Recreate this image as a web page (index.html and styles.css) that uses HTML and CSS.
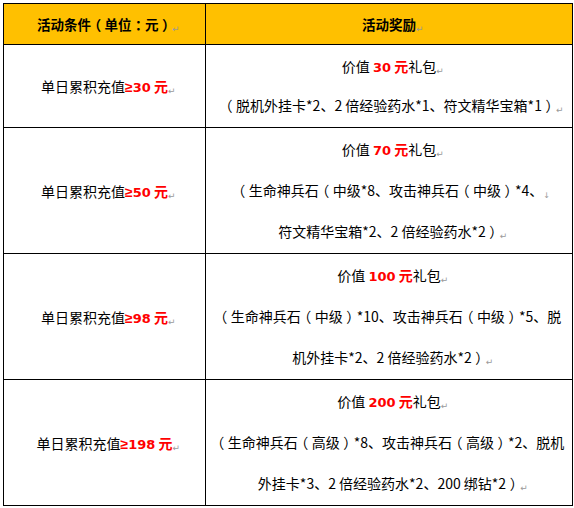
FILE: index.html
```html
<!DOCTYPE html>
<html lang="zh-CN">
<head>
<meta charset="utf-8">
<title>活动奖励</title>
<link rel="stylesheet" href="styles.css">
</head>
<body>
<table class="tbl">
  <colgroup><col class="c1"><col class="c2"></colgroup>
  <tr class="head">
    <th class="cond">活动条件<span class="pa">（</span>单位<span class="pa">：</span>元<span class="pa">）</span><span class="pm">↵</span></th>
    <th class="reward">活动奖励<span class="pm">↵</span></th>
  </tr>
  <tr class="r1">
    <td class="cond">单日累积充值<span class="ge">≥</span><span class="num">30</span> <span class="yuan">元</span><span class="pm">↵</span></td>
    <td class="reward">
      <div class="line">价值 <span class="num">30</span> <span class="yuan">元</span>礼包<span class="pm">↵</span></div>
      <div class="line"><span class="pa">（</span>脱机外挂卡*2、2 倍经验药水*1、符文精华宝箱*1<span class="pa">）</span><span class="pm">↵</span></div>
    </td>
  </tr>
  <tr class="r2">
    <td class="cond">单日累积充值<span class="ge">≥</span><span class="num">50</span> <span class="yuan">元</span><span class="pm">↵</span></td>
    <td class="reward">
      <div class="line">价值 <span class="num">70</span> <span class="yuan">元</span>礼包<span class="pm">↵</span></div>
      <div class="line"><span class="pa">（</span>生命神兵石<span class="pa">（</span>中级*8、攻击神兵石<span class="pa">（</span>中级<span class="pa">）</span>*4、<span class="pm br">↓</span></div>
      <div class="line">符文精华宝箱*2、2 倍经验药水*2<span class="pa">）</span><span class="pm">↵</span></div>
    </td>
  </tr>
  <tr class="r3">
    <td class="cond">单日累积充值<span class="ge">≥</span><span class="num">98</span> <span class="yuan">元</span><span class="pm">↵</span></td>
    <td class="reward">
      <div class="line">价值 <span class="num">100</span> <span class="yuan">元</span>礼包<span class="pm">↵</span></div>
      <div class="line"><span class="pa">（</span>生命神兵石<span class="pa">（</span>中级<span class="pa">）</span>*10、攻击神兵石<span class="pa">（</span>中级<span class="pa">）</span>*5、脱</div>
      <div class="line">机外挂卡*2、2 倍经验药水*2<span class="pa">）</span><span class="pm">↵</span></div>
    </td>
  </tr>
  <tr class="r4">
    <td class="cond">单日累积充值<span class="ge">≥</span><span class="num">198</span> <span class="yuan">元</span><span class="pm">↵</span></td>
    <td class="reward">
      <div class="line">价值 <span class="num">200</span> <span class="yuan">元</span>礼包<span class="pm">↵</span></div>
      <div class="line"><span class="pa">（</span>生命神兵石<span class="pa">（</span>高级<span class="pa">）</span>*8、攻击神兵石<span class="pa">（</span>高级<span class="pa">）</span>*2、脱机</div>
      <div class="line">外挂卡*3、2 倍经验药水*2、200 绑钻*2<span class="pa">）</span><span class="pm">↵</span></div>
    </td>
  </tr>
</table>
</body>
</html>
```

FILE: styles.css
```css
html, body {
  margin: 0;
  padding: 0;
  background: #ffffff;
}
body {
  padding: 3px 0 0 3px;
  font-family: "Noto Sans CJK SC", "Noto Sans", sans-serif;
  font-size: 14px;
  color: #000000;
}
.tbl {
  border-collapse: collapse;
  table-layout: fixed;
  width: 569px;
}
.c1 { width: 202px; }
.c2 { width: 367px; }
.tbl th, .tbl td {
  border: 1px solid #000000;
  padding: 0 4px;
  text-align: center;
  vertical-align: middle;
  white-space: nowrap;
}
.tbl td.reward, .tbl th.reward {
  position: relative;
}
.tbl td.reward::after, .tbl th.reward::after {
  content: "";
  position: absolute;
  right: -4px;
  top: 8px;
  width: 2px;
  height: 5px;
  background: #9a9a9a;
}
.head th {
  background: #ffc000;
  font-weight: bold;
  font-size: 13.5px;
  height: 40px;
  line-height: 40px;
}
.line {
  line-height: 41px;
  height: 41px;
}
.r1 td.reward .line { line-height: 39px; height: 39px; }
.r1 td.reward { padding-top: 2px; padding-bottom: 2px; }
.r2 td.reward, .r3 td.reward, .r4 td.reward { padding-top: 1px; padding-bottom: 1px; }
.pa {
  display: inline-block;
  width: 1em;
  text-align: center;
  font-feature-settings: "halt" 1;
}
.ge {
  color: #ff0000;
  font-family: "Liberation Sans", sans-serif;
  font-weight: bold;
}
.num {
  color: #ff0000;
  font-family: "DejaVu Sans", sans-serif;
  font-weight: bold;
  font-size: 13px;
}
.yuan {
  color: #ff0000;
  font-weight: bold;
}
.pm {
  display: inline-block;
  width: 0;
  overflow: visible;
  color: #9a9a9a;
  font-family: "DejaVu Sans", sans-serif;
  font-size: 9px;
  font-weight: normal;
  line-height: 1;
  vertical-align: -2px;
}
.pm.br {
  font-size: 8px;
}
```
